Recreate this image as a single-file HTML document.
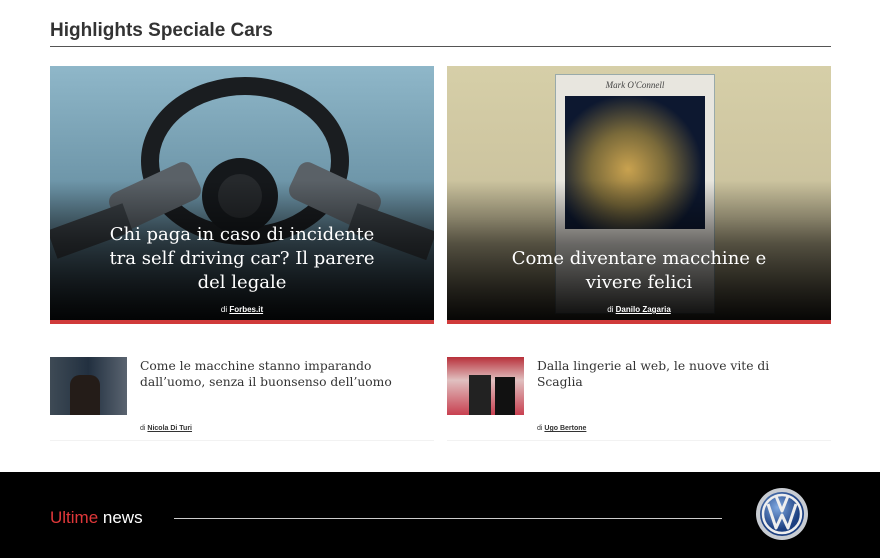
<!DOCTYPE html>
<html><head><meta charset="utf-8"><style>
*{margin:0;padding:0;box-sizing:border-box}
body{width:880px;height:558px;background:#fff;font-family:"Liberation Sans",sans-serif;position:relative;overflow:hidden}
.h{position:absolute;left:50px;top:20px;font-size:19px;font-weight:bold;color:#333}
.hl{position:absolute;left:50px;top:46px;width:781px;height:1px;background:#555}
.card{position:absolute;top:66px;width:384px;height:254px;overflow:hidden}
.ov{position:absolute;left:0;top:0;width:384px;height:254px;background:linear-gradient(rgba(0,0,0,0) 45%,rgba(0,0,0,.55) 70%,rgba(0,0,0,.95) 100%)}
.card .t{position:absolute;left:0;right:0;text-align:center;color:#fff;font-family:"DejaVu Serif",serif;font-size:18px;line-height:24px}
.card .by{position:absolute;left:0;right:0;bottom:6px;text-align:center;color:#fff;font-size:8px}
.card .by b{text-decoration:underline}
.red{position:absolute;top:320px;width:384px;height:4px;background:#d03a3a}
.thumb{position:absolute;top:357px;width:77px;height:58px}
.st{position:absolute;top:358px;font-family:"DejaVu Serif",serif;font-size:12.3px;line-height:16px;color:#333}
.sb{position:absolute;top:425px;font-size:7px;color:#333}
.sb b{text-decoration:underline}
.sep{position:absolute;top:440px;width:384px;height:1px;background:#f2f2f2}
.foot{position:absolute;left:0;top:472px;width:880px;height:86px;background:#000}
</style></head><body>
<div class="h">Highlights Speciale Cars</div>
<div class="hl"></div>

<div class="card" style="left:50px;background:linear-gradient(#8fb7c9 0%,#6b93a6 50%,#3a4a55 100%)">
 <svg width="384" height="254" style="position:absolute;left:0;top:0">
  <ellipse cx="195" cy="95" rx="95" ry="75" fill="none" stroke="#1a1d20" stroke-width="18"/>
  <circle cx="190" cy="130" r="38" fill="#15181b"/>
  <circle cx="190" cy="130" r="22" fill="#26292c"/>
  <rect x="60" y="110" width="90" height="40" rx="10" fill="#5a6167" transform="rotate(-25 105 130)"/>
  <rect x="240" y="110" width="90" height="40" rx="10" fill="#5a6167" transform="rotate(25 285 130)"/>
  <rect x="0" y="150" width="80" height="30" fill="#3a4045" transform="rotate(-20 40 165)"/>
  <rect x="300" y="150" width="84" height="30" fill="#3a4045" transform="rotate(20 340 165)"/>
 </svg>
 <div class="ov"></div>
 <div class="t" style="top:157px">Chi paga in caso di incidente<br>tra self driving car? Il parere<br>del legale</div>
 <div class="by">di <b>Forbes.it</b></div>
</div>
<div class="red" style="left:50px"></div>

<div class="card" style="left:447px;background:linear-gradient(#d6cfa8 0%,#c9c09c 60%,#8a8268 100%)">
 <div style="position:absolute;left:108px;top:8px;width:160px;height:240px;background:#e8e6df;border:1px solid #9aa"></div>
 <div style="position:absolute;left:118px;top:30px;width:140px;height:133px;background:radial-gradient(circle at 45% 55%,#c9a24f 0,#7a6a3a 35%,#0d1830 70%)"></div>
 <div style="position:absolute;left:108px;top:14px;width:160px;text-align:center;font-family:'Liberation Serif',serif;font-style:italic;font-size:9px;color:#444">Mark O'Connell</div>
 <div class="ov"></div>
 <div class="t" style="top:181px">Come diventare macchine e<br>vivere felici</div>
 <div class="by">di <b>Danilo Zagaria</b></div>
</div>
<div class="red" style="left:447px"></div>

<div class="thumb" style="left:50px;background:linear-gradient(90deg,#3e4a55,#223040 50%,#5a6470)"><div style="position:absolute;left:20px;top:18px;width:30px;height:40px;background:#241c18;border-radius:10px 10px 0 0"></div></div>
<div class="st" style="left:140px">Come le macchine stanno imparando<br>dall’uomo, senza il buonsenso dell’uomo</div>
<div class="sb" style="left:140px">di <b>Nicola Di Turi</b></div>
<div class="sep" style="left:50px"></div>

<div class="thumb" style="left:447px;background:linear-gradient(#b8303a,#e0c0c0 40%,#c84050)"><div style="position:absolute;left:22px;top:18px;width:22px;height:40px;background:#222"></div><div style="position:absolute;left:48px;top:20px;width:20px;height:38px;background:#111"></div></div>
<div class="st" style="left:537px">Dalla lingerie al web, le nuove vite di<br>Scaglia</div>
<div class="sb" style="left:537px">di <b>Ugo Bertone</b></div>
<div class="sep" style="left:447px"></div>

<div class="foot">
 <div style="position:absolute;left:50px;top:36px;font-size:17px;color:#fff"><span style="color:#e0383a">Ultime</span> news</div>
 <div style="position:absolute;left:174px;top:46px;width:548px;height:1px;background:#ccc"></div>
 <svg width="54" height="54" style="position:absolute;left:755px;top:15px" viewBox="0 0 54 54">
  <defs><radialGradient id="g" cx="40%" cy="35%"><stop offset="0" stop-color="#7fa8e0"/><stop offset="1" stop-color="#1c3f80"/></radialGradient></defs>
  <circle cx="27" cy="27" r="26" fill="#c8ccd2"/>
  <circle cx="27" cy="27" r="22" fill="url(#g)"/>
  <circle cx="27" cy="27" r="19" fill="none" stroke="#eee" stroke-width="2.5"/>
  <path d="M21 9 L27 24 L33 9 M13 17 L21 41 L27 28 L33 41 L41 17" fill="none" stroke="#eee" stroke-width="3" stroke-linejoin="round"/>
 </svg>
</div>
</body></html>
